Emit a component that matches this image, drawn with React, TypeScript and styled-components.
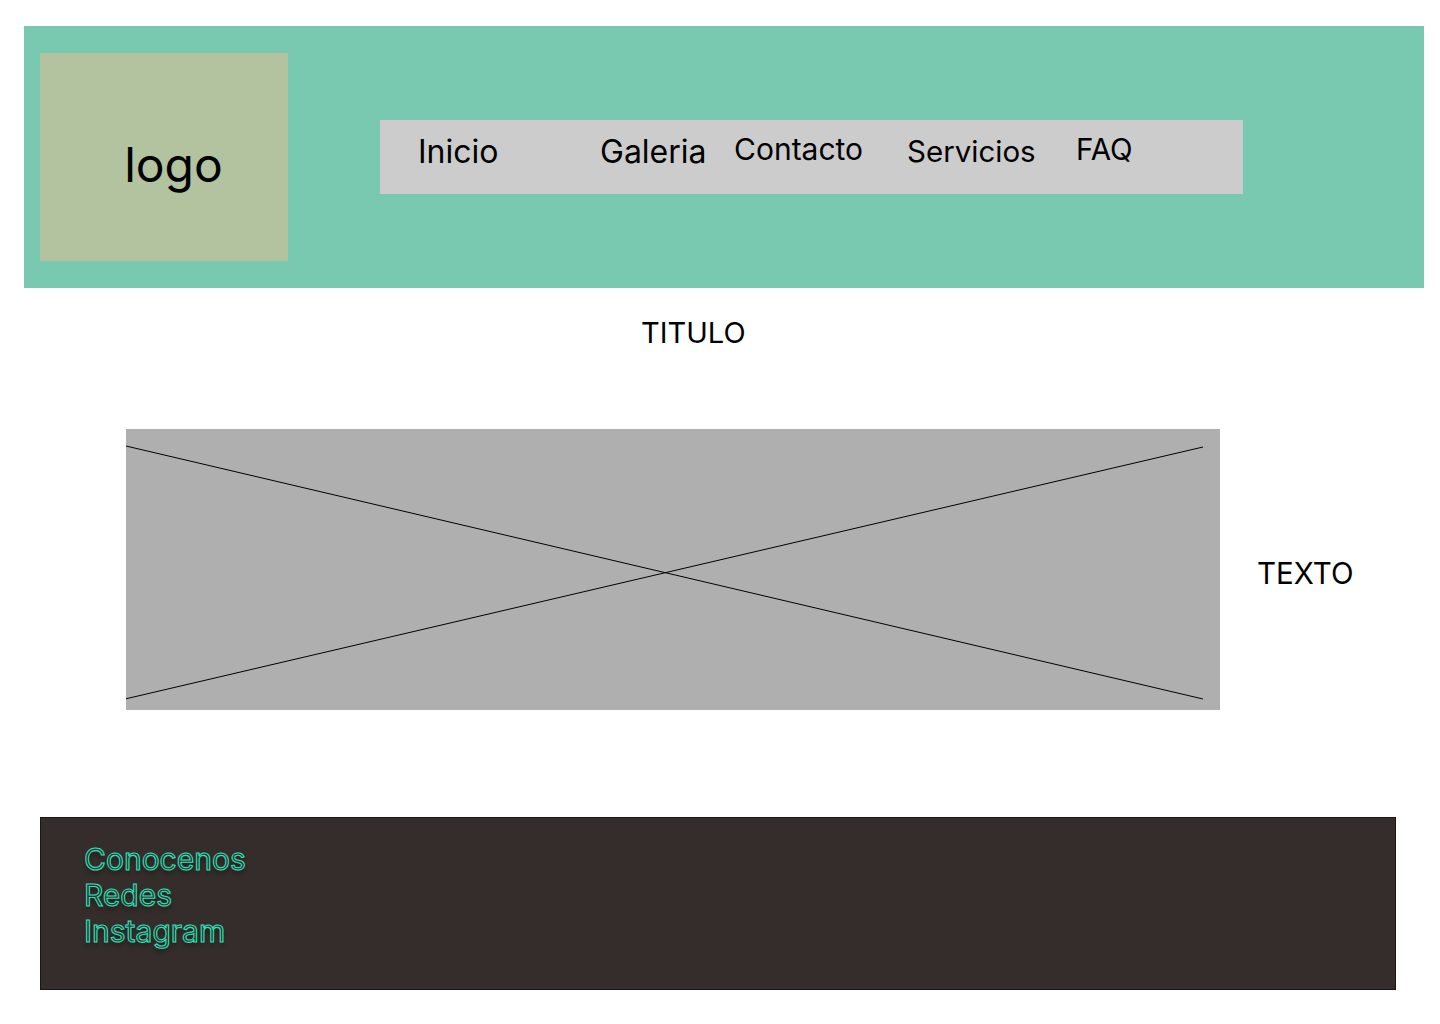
import React from "react";
import styled, { createGlobalStyle } from "styled-components";

const GlobalStyle = createGlobalStyle`
  html, body {
    margin: 0;
    padding: 0;
    background: #ffffff;
    font-family: Inter, "Noto Sans", sans-serif;
    color: #000000;
  }
`;

const Page = styled.div`
  width: 1440px;
  padding-top: 26px;
  display: flex;
  flex-direction: column;
`;

const Header = styled.header`
  margin: 0 16px 0 24px;
  height: 262px;
  box-sizing: border-box;
  padding: 27px 0 0 16px;
  background: #79c8b0;
  display: flex;
  align-items: flex-start;
`;

const Logo = styled.div`
  width: 248px;
  height: 208px;
  box-sizing: border-box;
  padding: 15px 0 0 19px;
  background: #b3c29f;
  display: flex;
  align-items: center;
  justify-content: center;
  font-size: 48px;
  color: #000;
`;

const Nav = styled.nav`
  margin: 67px 0 0 92px;
  width: 863px;
  height: 74px;
  box-sizing: border-box;
  padding: 12px 0 0 38px;
  background: #cccccc;
  display: grid;
  grid-template-columns: 182px 134px 173px 169px 1fr;
  align-items: start;
`;

const NavItem = styled.a<{ $dy: number; $size: number }>`
  font-size: ${(p) => p.$size}px;
  color: #000;
  text-decoration: none;
  white-space: nowrap;
  transform: translateY(${(p) => p.$dy}px);
`;

const Title = styled.h1`
  margin: 27px 0 0 641px;
  font-size: 29px;
  font-weight: 400;
  line-height: 36px;
  color: #000;
`;

const Feature = styled.section`
  margin: 78px 0 0 126px;
  display: flex;
  align-items: center;
  gap: 37px;
`;

const ImagePlaceholder = styled.div`
  width: 1094px;
  height: 281px;
  background: #afafaf;
  flex-shrink: 0;
  display: flex;
`;

const CrossLines = styled.svg`
  width: 100%;
  height: 100%;
  display: block;
`;

const SideText = styled.p`
  margin: 6px 0 0 0;
  font-size: 29.5px;
  line-height: 36px;
  color: #000;
`;

const Footer = styled.footer`
  margin: 107px 0 0 40px;
  width: 1356px;
  height: 173px;
  box-sizing: border-box;
  padding: 23px 0 0 43px;
  background: #352d2b;
  border: 1px solid #1c1716;
  display: flex;
  flex-direction: column;
`;

const FooterLink = styled.a`
  font-size: 30px;
  line-height: 36px;
  color: #352d2b;
  -webkit-text-stroke: 1.1px #2ae6bd;
  text-shadow: 0 4px 4px rgba(0, 0, 0, 0.35);
  text-decoration: none;
`;

const navItems = [
  { label: "Inicio", dy: 0, size: 32 },
  { label: "Galeria", dy: 0, size: 32 },
  { label: "Contacto", dy: -1, size: 30 },
  { label: "Servicios", dy: 1, size: 29.5 },
  { label: "FAQ", dy: -1, size: 29.5 },
];

export default function App() {
  return (
    <>
      <GlobalStyle />
      <Page>
        <Header>
          <Logo>logo</Logo>
          <Nav>
            {navItems.map((item) => (
              <NavItem key={item.label} $dy={item.dy} $size={item.size} href="#">
                {item.label}
              </NavItem>
            ))}
          </Nav>
        </Header>
        <Title>TITULO</Title>
        <Feature>
          <ImagePlaceholder>
            <CrossLines viewBox="0 0 1094 281" preserveAspectRatio="none">
              <line x1="0" y1="17" x2="1077" y2="270" stroke="#000" strokeWidth="1" />
              <line x1="-1" y1="270" x2="1077" y2="18" stroke="#000" strokeWidth="1" />
            </CrossLines>
          </ImagePlaceholder>
          <SideText>TEXTO</SideText>
        </Feature>
        <Footer>
          <FooterLink href="#">Conocenos</FooterLink>
          <FooterLink href="#">Redes</FooterLink>
          <FooterLink href="#">Instagram</FooterLink>
        </Footer>
      </Page>
    </>
  );
}
